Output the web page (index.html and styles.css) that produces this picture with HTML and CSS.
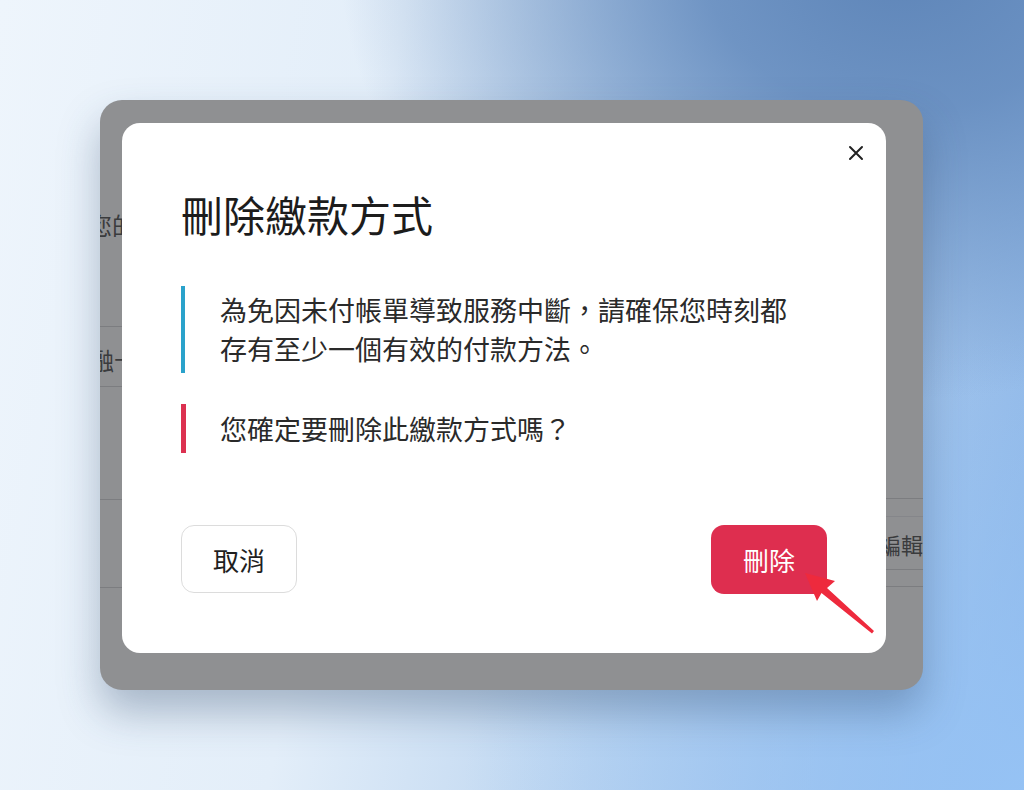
FILE: index.html
```html
<!DOCTYPE html>
<html lang="zh-Hant">
<head>
<meta charset="utf-8">
<title>刪除繳款方式</title>
<link rel="stylesheet" href="styles.css">
</head>
<body>
<div class="stage">
  <div class="behind">
    <div class="col col-left">
      <div class="row r1"><span class="txt t1">您的</span></div>
      <div class="row r2"><span class="txt t2">金融卡</span></div>
      <div class="row r3"></div>
      <div class="row r4"></div>
    </div>
    <div class="col col-right">
      <div class="row q1"></div>
      <div class="row q2"></div>
      <div class="row q3"><span class="txt t3">編輯</span></div>
      <div class="row q4"></div>
    </div>
  </div>

  <div class="modal">
    <button class="close" aria-label="關閉">
      <svg width="16" height="16" viewBox="0 0 16 16"><path d="M2 2 L14 14 M14 2 L2 14" stroke="#222" stroke-width="2" stroke-linecap="round" fill="none"/></svg>
    </button>
    <h1 class="title">刪除繳款方式</h1>
    <p class="note note-info">為免因未付帳單導致服務中斷，請確保您時刻都<br>存有至少一個有效的付款方法。</p>
    <p class="note note-warn">您確定要刪除此繳款方式嗎？</p>
    <div class="actions">
      <button class="btn btn-cancel">取消</button>
      <button class="btn btn-delete">刪除</button>
    </div>
  </div>

  <svg class="arrow" width="823" height="590" viewBox="0 0 823 590">
    <polygon points="705,473 735,481 727,488 774,531 772,533.5 721.5,493 717,501" fill="#ee2a3d"/>
  </svg>
</div>
</body>
</html>
```

FILE: styles.css
```css
html, body {
  margin: 0;
  padding: 0;
}
body {
  width: 1024px;
  height: 790px;
  overflow: hidden;
  font-family: "Noto Sans CJK TC", "Noto Sans", sans-serif;
  background:
    radial-gradient(ellipse 560px 440px at 900px -40px, rgba(94,133,184,1) 0%, rgba(98,137,188,0.85) 35%, rgba(110,150,200,0) 100%),
    radial-gradient(ellipse 560px 460px at 1024px 790px, rgba(150,195,245,0.95) 0%, rgba(150,195,245,0) 100%),
    linear-gradient(100deg, #eef5fc 0%, #e3eef9 35%, #bcd5f0 62%, #8db6e7 100%);
}
.stage {
  position: relative;
  margin: 100px 0 0 100px;
  width: 823px;
  height: 590px;
  border-radius: 22px;
  background: #8f9092;
  overflow: hidden;
  box-shadow: 0 22px 40px rgba(50, 75, 110, 0.35);
}
.behind {
  display: flex;
  justify-content: space-between;
  height: 100%;
}
.col {
  display: flex;
  flex-direction: column;
}
.col-left { width: 40px; }
.col-right { width: 60px; }
.row {
  box-sizing: border-box;
  border-bottom: 1px solid #7c7d80;
  position: relative;
}
.r1 { height: 227px; }
.r2 { height: 60px; }
.r3 { height: 113px; }
.r4 { height: 88px; }
.q1 { height: 399px; }
.q2 { height: 18px; border-bottom-color: #85868a; }
.q3 { height: 53px; }
.q4 { height: 17px; }
.txt {
  display: block;
  font-size: 24px;
  line-height: 30px;
  color: #3a3b3d;
  white-space: nowrap;
}
.t1 { margin: 110px 0 0 -12px; }
.t2 { margin: 18px 0 0 -34px; }
.t3 { margin: 12px 0 0 16px; font-size: 22px; }

.modal {
  position: absolute;
  left: 22px;
  top: 23px;
  width: 764px;
  height: 530px;
  box-sizing: border-box;
  padding: 66px 59px 0;
  background: #ffffff;
  border-radius: 18px;
  display: flex;
  flex-direction: column;
}
.close {
  position: absolute;
  top: 22px;
  right: 22px;
  width: 16px;
  height: 16px;
  padding: 0;
  border: 0;
  background: none;
  display: flex;
}
.title {
  margin: 0;
  font-size: 42px;
  line-height: 50px;
  font-weight: 400;
  color: #1c1c1c;
}
.note {
  margin: 0;
  font-size: 27px;
  line-height: 39px;
  color: #2a2a2a;
  padding-left: 35px;
}
.note-info {
  margin-top: 47px;
  padding-top: 4px;
  padding-bottom: 5px;
  border-left: 4px solid #2aa2cb;
}
.note-warn {
  margin-top: 31px;
  padding-top: 5px;
  padding-bottom: 5px;
  border-left: 5px solid #dc3150;
  padding-left: 34px;
}
.actions {
  margin-top: 72px;
  display: flex;
  justify-content: space-between;
}
.btn {
  width: 116px;
  height: 68px;
  border-radius: 13px;
  font-family: "Noto Sans CJK TC", "Noto Sans", sans-serif;
  font-size: 26px;
  padding: 0;
}
.btn-cancel {
  background: #ffffff;
  border: 1px solid #dcdcdc;
  color: #1f1f1f;
}
.btn-delete {
  background: #de2e4f;
  border: 0;
  color: #ffffff;
  height: 69px;
}
.arrow {
  position: absolute;
  left: 0;
  top: 0;
  pointer-events: none;
}
```
